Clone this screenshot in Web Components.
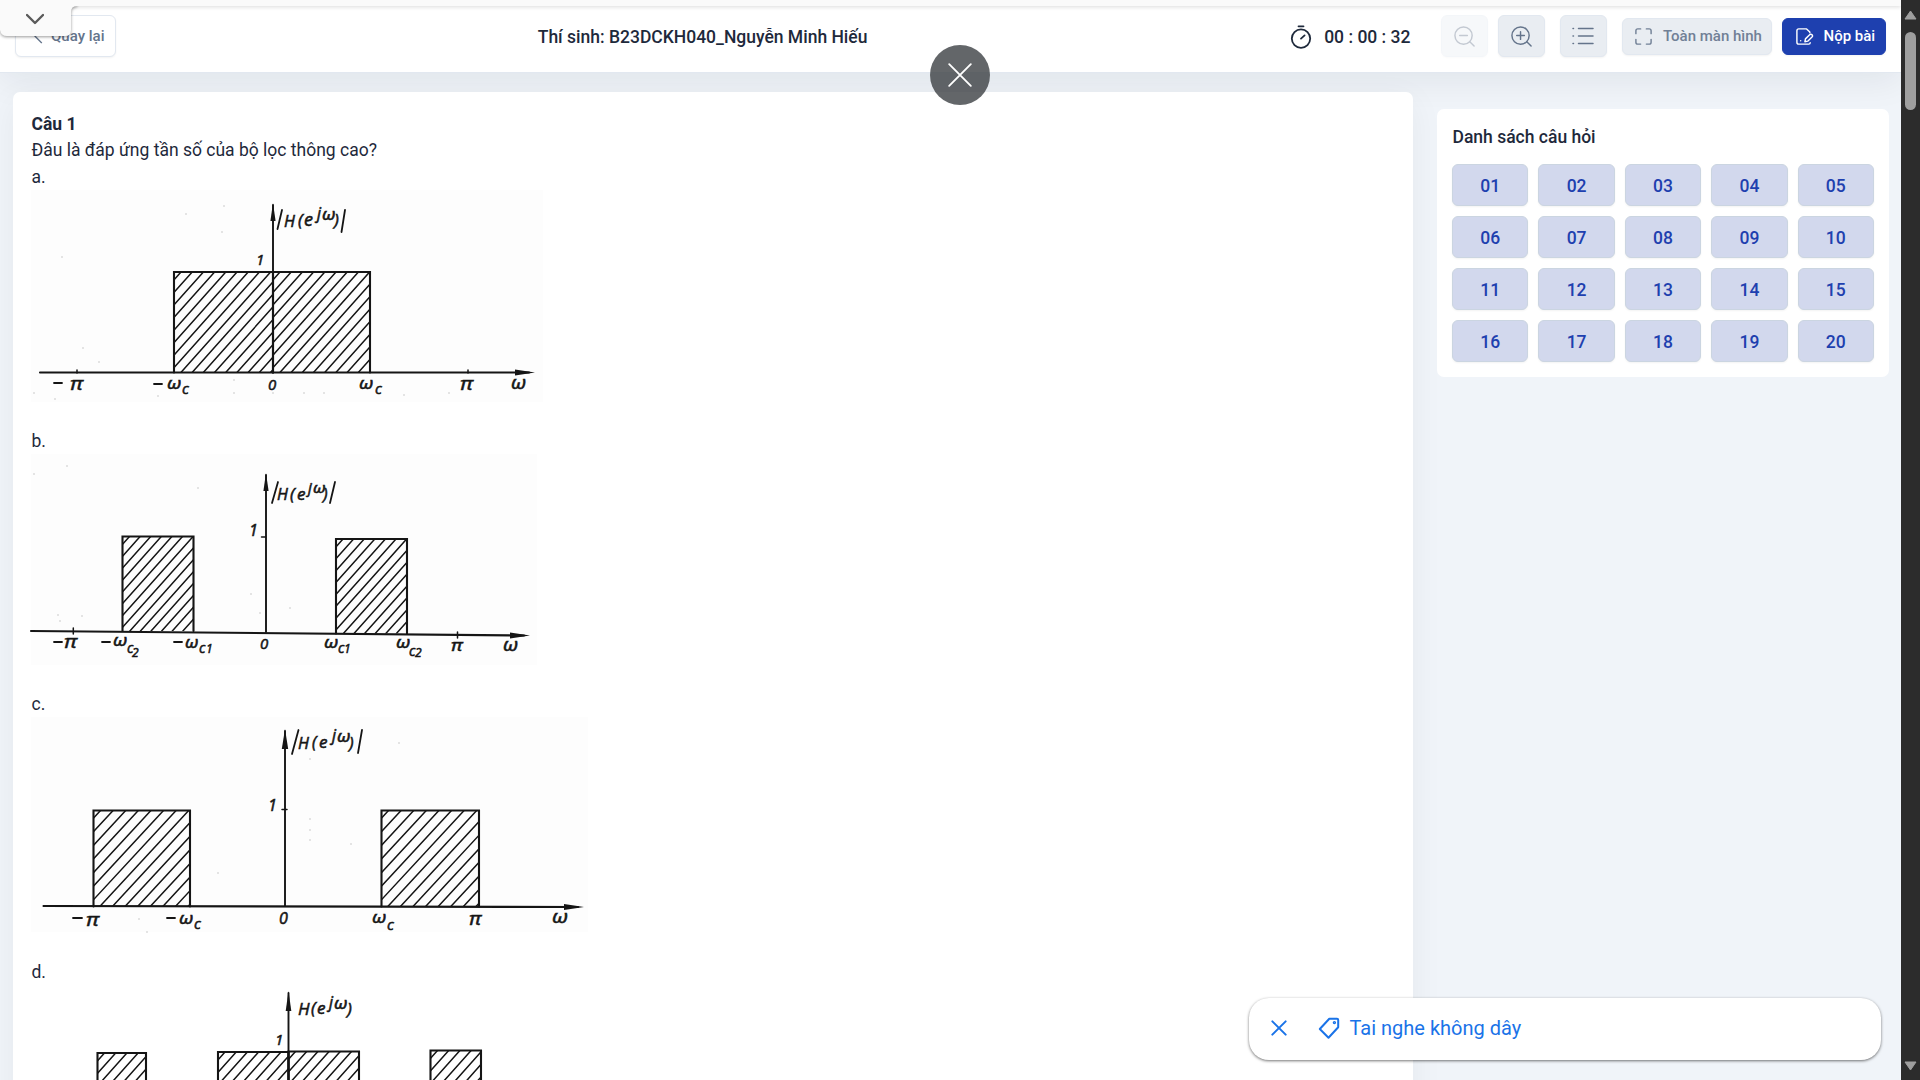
<!DOCTYPE html>
<html lang="vi">
<head>
<meta charset="utf-8">
<title>Bài thi</title>
<style>
html,body{margin:0;height:100%;overflow:hidden}
body{font-family:Roboto,"Liberation Sans",sans-serif;color:#1e293b;background:#f0f4f9}
</style>
</head>
<body>
<exam-page></exam-page>
<script>
const define=(name,html,setup)=>customElements.define(name,class extends HTMLElement{
  connectedCallback(){
    if(this.shadowRoot)return;
    const t=document.createElement('template');
    t.innerHTML=typeof html==='function'?html(this):html;
    this.attachShadow({mode:'open'}).append(t.content.cloneNode(true));
    if(setup)setup(this);
  }
});

/* Line icons */
const icons={
  back:['0 0 24 24','<path d="M15 4l-8 8 8 8"/>'],
  watch:['0 0 24 24','<circle cx="12" cy="13.6" r="9.2"/><path d="M9.500 1.3h5M12 13.6l3.6-3.2"/>'],
  minus:['0 0 24 24','<circle cx="11" cy="11" r="9"/><path d="M7 11h8M17.5 17.5L22 22"/>'],
  plus:['0 0 24 24','<circle cx="11" cy="11" r="9"/><path d="M7 11h8M11 7v8M17.5 17.5L22 22"/>'],
  list:['0 0 24 24','<path d="M7.5 4.5H22M7.5 12H22M7.5 19.5H22M2 4.5h.5M2 12h.5M2 19.5h.5"/>'],
  full:['0 0 20 20','<path d="M2 7V4Q2 2 4 2h3M13 2h3q2 0 2 2v3M18 13v3q0 2-2 2h-3M7 18H4q-2 0-2-2v-3"/>'],
  submit:['0 0 20 20','<path d="M15.6 6V5.2L12.2 2H4Q2 2 2 4v12q0 2 2 2h10.500q1.500 0 1.500-1.500M15.400 8.200q1.400-1.200 2.500 0t0 2.400l-4.500 4.300-3 .6.6-3zM6 14.500v.1"/>'],
  tag:['0 0 24 24','<path d="M12.300 2.800H20Q21.200 2.800 21.200 4V11.300L11.500 21.700 2.800 13z"/><circle cx="17.400" cy="6.600" r=".7"/>'],
  x:['0 0 24 24','<path d="M2 2L22 22M22 2L2 22"/>'],
  down:['0 0 18 12','<path d="M1 2l8 8 8-8"/>']
};
define('line-icon',el=>{
  const [box,art]=icons[el.getAttribute('name')];
  const s=el.getAttribute('size')||20,h=el.getAttribute('height')||s,w=el.getAttribute('stroke')||1.5;
  return `<style>:host{display:block;flex:none;width:${s}px;height:${h}px}svg{display:block;width:100%;height:100%;fill:none;stroke:currentColor;stroke-width:${w};stroke-linecap:round;stroke-linejoin:round}</style><svg viewBox="${box}">${art}</svg>`;
});

define('tool-button',`<style>
:host{display:flex;align-items:center;justify-content:center;box-sizing:border-box;width:47px;height:42px;border-radius:6px;border:1px solid #e2e8f0;background:#e9edf2;color:#64748b;box-shadow:0 1px 2px rgba(0,0,0,.05);font-size:15px;font-weight:500;white-space:nowrap}
:host([kind=disabled]){opacity:.38}
:host([kind=wide]){width:150px;height:37px;margin-top:1px;padding-bottom:1px;gap:10px;justify-content:flex-start;padding-left:11px;color:#718096}
:host([kind=primary]){width:104px;height:37px;margin-top:1px;padding-bottom:1px;gap:9.500px;justify-content:flex-start;padding-left:12px;background:#1e40af;border-color:#1e40af;color:#fff}
:host([kind=back]){width:101px;background:#fff;gap:2px;justify-content:flex-start;padding-left:13px}
</style><slot name="icon"></slot><slot></slot>`);

define('exam-header',`<style>
:host{display:flex;justify-content:space-between;align-items:center;box-sizing:border-box;height:73px;padding:0 15px;background:#fff;border-bottom:1px solid #e2e8f0;box-shadow:0 8px 34px rgba(15,23,42,.07);position:relative}
.name{font-size:17.5px;font-weight:500;padding-top:1px}
.tools{display:flex;align-items:center}
.clock{display:flex;align-items:center;gap:11px;font-size:17.5px;font-weight:500;margin-right:30.500px;padding-top:1px;white-space:nowrap}
.g{margin-right:10px}.h{margin-right:15px}
</style>
<tool-button kind="back"><line-icon slot="icon" name="back" size="20" stroke="1.600"></line-icon>Quay lại</tool-button>
<div class="name">Thí sinh: B23DCKH040_Nguyễn Minh Hiếu</div>
<div class="tools">
<div class="clock"><line-icon name="watch" size="24" stroke="1.8"></line-icon><span>00 : 00 : 32</span></div>
<tool-button class="g" kind="disabled"><line-icon slot="icon" name="minus" size="23"></line-icon></tool-button>
<tool-button class="h"><line-icon slot="icon" name="plus" size="23"></line-icon></tool-button>
<tool-button class="h"><line-icon slot="icon" name="list" size="24"></line-icon></tool-button>
<tool-button class="g" kind="wide"><line-icon slot="icon" name="full" size="19"></line-icon>Toàn màn hình</tool-button>
<tool-button kind="primary"><line-icon slot="icon" name="submit" size="19"></line-icon>Nộp bài</tool-button>
</div>`);

/* Frequency-response sketches. ink(text, x, baseline, size) puts one mark; Greek letters are drawn wide. */
const wide={'ω':.84,'π':.7};
const ink=(s,x,y,z=16)=>`<text x="${x}" y="${y}" font-size="${z}"${wide[s]?` textLength="${(z*wide[s]).toFixed(1)}" lengthAdjust="spacingAndGlyphs"`:''}>${s}</text>`;
const dash=(x,y,w=8)=>`<path stroke-width="1.800" d="M${x} ${y}h${w}"/>`;
const bar=(x,y,w,h)=>`<path stroke-width="1.800" d="M${x} ${y+h}L${x+w} ${y}"/>`;
let clipId=0;
const block=(x,y,w,h,step=11.2,k=1.12)=>{
  let d='';const id='c'+(++clipId);
  for(let s=x-h/k+7;s<x+w;s+=step)d+=`M${s.toFixed(1)} ${y+h}L${(s+h/k).toFixed(1)} ${y}`;
  return `<clipPath id="${id}"><rect x="${x}" y="${y}" width="${w}" height="${h}"/></clipPath><path clip-path="url(#${id})" stroke-width="1.500" d="${d}"/><path stroke-width="2.100" d="M${x} ${y+h}V${y}H${x+w}V${y+h}"/>`;
};
const up=(x,y,b,hw=2.600,hl=18)=>`<path stroke-width="1.900" d="M${x} ${b}V${y+2}"/><path fill="#151515" stroke="none" d="M${x} ${y}l${hw} ${hl}h${-2*hw}z"/>`;
const right=(x0,y0,x1,y1)=>`<path stroke-width="2.100" d="M${x0} ${y0}L${x1-4} ${y1}"/><path fill="#151515" stroke="none" d="M${x1+2} ${y1}l-20 -3v6z"/>`;
const specks=a=>a.map(p=>`<circle cx="${p[0]}" cy="${p[1]}" r=".8" fill="#c4c4c4" stroke="none"/>`).join('');
const plots={
 a:{box:[31,190,512,212],art:()=>block(174,272,99,100.5)+block(273,272,97,100.500)+up(273,203,372.500)+right(40,372.500,533,372.500)
  +'<path d="M77 370v3M468 370v3"/>'
  +bar(277.500,210,4.500,19)+ink('H',284,227,16)+ink('(',298,226,17)+ink('e',304,226,18)+ink('j',317,219,16)+ink('ω',322,220,16)+ink(')',334,226,17)+bar(341.500,210,3.500,22)
  +ink('1',256,265,15)+dash(54,383)+ink('π',70,390,19)+dash(154,384)+ink('ω',167,389,17)+ink('c',182,394,15)+ink('0',268,390,15)+ink('ω',359,389,17)+ink('c',375,394,15)+ink('π',460,390,19)+ink('ω',511,389,18)
  +specks([[62,257],[83,348],[99,362],[186,214],[222,232],[224,206],[34,393],[55,399],[158,396],[234,380],[234,393],[273,393],[304,393],[324,393],[404,395],[449,393]])},
 b:{box:[31,454,506,211],art:()=>block(122.500,536.500,71,94.500,10.600)+block(336,539,71,94.500,10.600)+up(266,473,632)+right(31,631,528,635.500)
  +'<path d="M73.300 628v6M457.500 632v6M261.500 537h4"/>'
  +bar(272,482,6,21)+ink('H',277,500,16)+ink('(',290,500,17)+ink('e',297,500,17)+ink('j',308,493,15)+ink('ω',313,493,15)+ink(')',323,500,16)+bar(330,482,5,21)
  +ink('1',249,536,16)+dash(54,642)+ink('π',64,648,19)+dash(102,642)+ink('ω',113,646,17)+ink('c',127,653,14)+ink('2',132,657,12)+dash(174,642)+ink('ω',185,648,16)+ink('c',199,653,14)+ink('1',206,653,12)+ink('0',260,649,15)
  +ink('ω',324,648,17)+ink('c',338,653,14)+ink('1',344,653,12)+ink('ω',396,648,17)+ink('c',409,656,14)+ink('2',415,657,12)+ink('π',451,651,17)+ink('ω',503,651,18)
  +specks([[67,466],[34,474],[58,615],[82,616],[60,621],[198,488],[251,594],[260,613],[290,608]])},
 c:{box:[31,717,557,215],art:()=>block(93.500,810.500,96.500,96,12.600,1.080)+block(381.500,810.500,97.500,96,12.600,1.080)+up(285,729,906,3.200,20)+right(43.500,906,582,907)
  +'<path d="M282 809.500h5"/>'
  +bar(292,730,6.500,24)+ink('H',298,749,16)+ink('(',312,748,16)+ink('e',319,748,17)+ink('j',332,741,16)+ink('ω',337,742,16)+ink(')',349,749,16)+bar(358,730,4,23)
  +ink('1',268,811,16)+dash(73,918,9)+ink('π',86,926,19)+dash(167,918)+ink('ω',179,924,17)+ink('c',194,929,15)+ink('0',279,924,16)+ink('ω',372,923,17)+ink('c',387,930,15)+ink('π',469,925,18)+ink('ω',552,923,19)
  +specks([[399,743],[310,759],[310,819],[310,830],[310,840],[351,844],[218,873],[139,919],[147,932]])},
 d:{box:[31,984,556,215],art:()=>block(97.500,1053,48.500,100)+block(218,1052,70.500,100)+block(288.500,1051.500,70.500,100)+block(430.500,1050.500,50.500,100)+up(288.500,991,1152,2.800,20)
  +ink('H',298,1015,17)+ink('(',311,1014,17)+ink('e',317,1014,17)+ink('j',329,1008,16)+ink('ω',334,1009,16)+ink(')',347,1015,17)+ink('1',275,1045,15)}
};
define('response-plot',el=>{
  const p=plots[el.getAttribute('kind')],b=p.box;
  return `<style>:host{display:block;width:${b[2]}px;height:${b[3]}px;background:${el.getAttribute('kind')==='d'?'#fff':'#fdfdfd'}}svg{display:block;overflow:visible;stroke:#151515;stroke-width:1.500;fill:none;stroke-linecap:round}text{fill:#151515;stroke:#151515;stroke-width:.55;font-family:"Open Sans","DejaVu Sans",sans-serif;font-style:italic}</style><svg width="${b[2]}" height="${b[3]}" viewBox="${b.join(' ')}">${p.art()}</svg>`;
});

define('answer-option',`<style>:host{display:block}.k{height:27px;line-height:28px;padding-left:.5px}</style><div class="k"><slot name="key"></slot></div><slot></slot>`);

define('question-card',`<style>
:host{display:block;box-sizing:border-box;width:1400px;height:1100px;background:#fff;border-radius:7px;padding:19px 18px 0 18px;box-shadow:0 8px 34px rgba(15,23,42,.05);font-size:17.5px}
.t,.q{padding-left:.5px}
.t{font-weight:700;height:26px;line-height:26px}.q{height:26px;line-height:27px}
answer-option:nth-of-type(1){height:264px}answer-option:nth-of-type(2){height:263px}answer-option:nth-of-type(3){height:267px}
answer-option:nth-of-type(4) span{position:relative;top:1px}
</style>
<div class="t">Câu 1</div><div class="q">Đâu là đáp ứng tần số của bộ lọc thông cao?</div>
<answer-option><span slot="key">a.</span><response-plot kind="a"></response-plot></answer-option>
<answer-option><span slot="key">b.</span><response-plot kind="b"></response-plot></answer-option>
<answer-option><span slot="key">c.</span><response-plot kind="c"></response-plot></answer-option>
<answer-option><span slot="key">d.</span><response-plot kind="d"></response-plot></answer-option>`);

define('question-list',`<style>
:host{display:block;box-sizing:border-box;width:452px;height:268px;margin-top:17px;background:#fff;border-radius:7px;padding:15px}
.h{font-size:17.5px;font-weight:500;line-height:27px;height:40px;padding-left:.5px}
.grid{display:grid;grid-template-columns:repeat(5,1fr);gap:10px}
.grid div{box-sizing:border-box;height:42px;border-radius:6px;border:1px solid #cbd5e1;background:#d2d8ed;color:#1e40af;font-size:17.5px;font-weight:500;padding-top:1px;display:flex;align-items:center;justify-content:center;box-shadow:0 1px 2px rgba(0,0,0,.05)}
</style><div class="h">Danh sách câu hỏi</div><div class="grid"></div>`,el=>{
  const g=el.shadowRoot.querySelector('.grid');
  for(let i=1;i<=20;i++){const d=document.createElement('div');d.textContent=String(i).padStart(2,'0');g.append(d);}
});

define('page-scrollbar',`<style>
:host{display:flex;flex-direction:column;align-items:center;justify-content:space-between;box-sizing:border-box;width:19px;height:1080px;background:#2c2c2c;padding:10px 0 9px}
.top{display:flex;flex-direction:column;align-items:center;gap:12px}
i{display:block;width:11px;height:78px;border-radius:6px;background:#9f9f9f}svg{display:block}
</style><div class="top"><svg width="13" height="10"><path fill="#9f9f9f" stroke="#9f9f9f" stroke-linejoin="round" d="M6.500 1L12 9H1z"/></svg><i></i></div><svg width="13" height="10"><path fill="#9f9f9f" stroke="#9f9f9f" stroke-linejoin="round" d="M1 1h11L6.500 9z"/></svg>`);

define('browser-tab',`<style>
:host{display:block;position:absolute;inset:0 0 auto 0;height:40px;z-index:3}
.strip{height:6px;background:#fafafa;box-shadow:0 1px 4px rgba(0,0,0,.14)}
svg{position:absolute;left:0;top:0;filter:drop-shadow(0 1px 1.500px rgba(0,0,0,.4))}
line-icon{position:absolute;left:26px;top:13px;color:#5a5a5a}
.cover{position:absolute;left:0;top:0;width:90px;height:6px;background:#fafafa}
</style><div class="strip"></div><svg width="90" height="42"><path fill="#fafafa" d="M0 0H77V6Q71 6 71 12V30Q71 36 65 36H7Q1 36 0 30z"/></svg><div class="cover"></div><line-icon name="down" size="18" height="12" stroke="2.400"></line-icon>`);

define('close-bubble',`<style>:host{position:absolute;left:930px;top:45px;width:60px;height:60px;border-radius:50%;background:rgba(60,64,67,.8);color:#fff;display:flex;align-items:center;justify-content:center;z-index:4}</style><line-icon name="x" size="26" stroke="1.700"></line-icon>`);

define('suggest-toast',`<style>:host{position:absolute;left:1249px;top:998px;width:632px;height:62px;box-sizing:border-box;border-radius:20px;background:#fff;color:#1a73e8;display:flex;align-items:center;padding-left:21.500px;padding-bottom:2px;font-size:20px;box-shadow:0 1px 3px rgba(0,0,0,.55);z-index:4}
line-icon+line-icon{margin:0 8.500px 0 30.500px}</style><line-icon name="x" size="16" stroke="3"></line-icon><line-icon name="tag" size="24" stroke="2"></line-icon><span>Tai nghe không dây</span>`);

define('exam-page',`<style>
:host{display:flex;position:relative;width:1920px;height:1080px;overflow:hidden}
.view{flex:1;position:relative;overflow:hidden;height:1080px}
.cols{display:flex;gap:24px;padding:19px 0 0 13px}
exam-header{z-index:2}
question-card{position:relative;z-index:2}
</style>
<div class="view"><browser-tab></browser-tab><exam-header></exam-header><div class="cols"><question-card></question-card><question-list></question-list></div></div>
<page-scrollbar></page-scrollbar><close-bubble></close-bubble><suggest-toast></suggest-toast>`);
</script>
</body>
</html>
